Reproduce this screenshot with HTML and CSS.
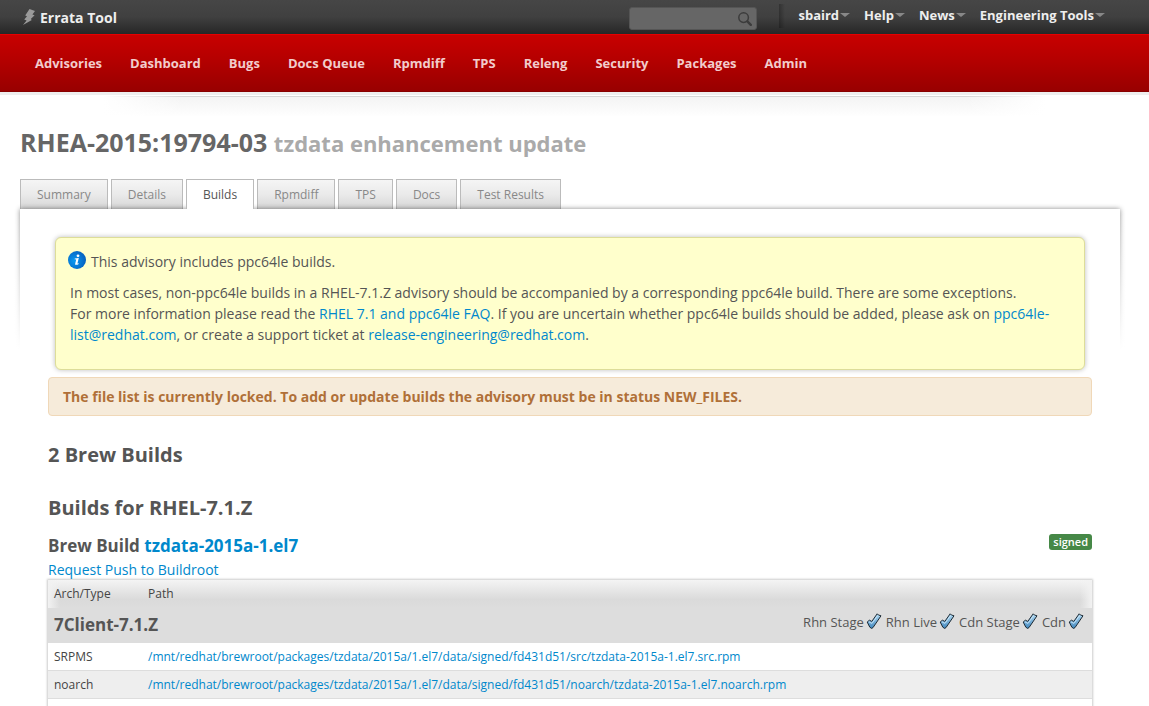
FILE: index.html
```html
<!DOCTYPE html>
<html lang="en">
<head>
<meta charset="utf-8">
<meta name="viewport" content="width=device-width, initial-scale=1">
<title>RHEA-2015:19794-03 - Errata Tool</title>
<link rel="stylesheet" href="styles.css">
</head>
<body>
<svg class="defs" aria-hidden="true">
  <defs>
    <linearGradient id="tick-fill" x1="0" y1="0" x2="0" y2="1"><stop offset="0" stop-color="#b4dcf5"/><stop offset="1" stop-color="#3f86bd"/></linearGradient>
    <radialGradient id="info-fill" cx=".35" cy=".55" r=".75"><stop offset="0" stop-color="#0a9af0"/><stop offset="1" stop-color="#0457b8"/></radialGradient>
    <symbol id="tick" viewBox="0 0 16 16"><path d="M1.2 9 3.4 7.2 5.8 8.4 11.2 .8 12.4 2 15 2.8 7 14.6 5.6 15.4 3.8 14.2Z" fill="url(#tick-fill)" stroke="#1c2a34" stroke-width="1" stroke-linejoin="round"/><path d="M2.8 8.8 6 10.4 11.6 2.6" fill="none" stroke="#d6eefb" stroke-width=".8"/></symbol>
  </defs>
</svg>
<header>
  <div class="topbar">
    <a class="brand" href="#">
      <svg class="bolt" viewBox="0 0 12 16" aria-hidden="true"><path d="M6.5 0 12 2 9.4 5.4 11.6 6.2 7.8 10 8.8 11 0 16 3.6 11.4 1.2 10.4 4 7.2 2.2 6.4Z" fill="#9a9a9a"/></svg>
      Errata Tool
    </a>
    <form class="search" role="search">
      <input type="search" aria-label="Search">
      <button type="button" aria-label="Search">
        <svg viewBox="0 0 14 14" aria-hidden="true"><circle cx="5.6" cy="5.6" r="4.8" fill="none" stroke="#3c3c3c" stroke-width="1.5"/><path d="M9.4 9.4 12.8 12.8" stroke="#3c3c3c" stroke-width="2.4" stroke-linecap="round"/></svg>
      </button>
    </form>
    <div class="menus">
      <button type="button">sbaird</button>
      <button type="button">Help</button>
      <button type="button">News</button>
      <button type="button">Engineering Tools</button>
    </div>
  </div>
  <nav class="mainnav" aria-label="Main">
    <a href="#">Advisories</a>
    <a href="#">Dashboard</a>
    <a href="#">Bugs</a>
    <a href="#">Docs Queue</a>
    <a href="#">Rpmdiff</a>
    <a href="#">TPS</a>
    <a href="#">Releng</a>
    <a href="#">Security</a>
    <a href="#">Packages</a>
    <a href="#">Admin</a>
  </nav>
  <div class="underline"></div>
</header>
<main>
  <h1>RHEA-2015:19794-03 <small>tzdata enhancement update</small></h1>
  <nav class="tabs" aria-label="Advisory">
    <a href="#">Summary</a>
    <a href="#">Details</a>
    <a href="#" class="active" aria-current="page">Builds</a>
    <a href="#">Rpmdiff</a>
    <a href="#">TPS</a>
    <a href="#">Docs</a>
    <a href="#">Test Results</a>
  </nav>
  <section class="panel">
    <div class="content">
      <div class="note">
        <p class="note-title">
          <svg viewBox="0 0 18 18" aria-hidden="true"><circle cx="9" cy="9" r="9" fill="url(#info-fill)"/><circle cx="10" cy="4.8" r="1.4" fill="#fff"/><path d="M6.8 7.4 10.8 7 9.4 12.4 10.8 12.2 10.4 13.2Q8.6 14.2 7 13.4L8.2 8.4 6.6 8.2Z" fill="#fff"/></svg>
          This advisory includes ppc64le builds.
        </p>
        <p>In most cases, non-ppc64le builds in a RHEL-7.1.Z advisory should be accompanied by a corresponding ppc64le build. There are some exceptions.<br>
        For more information please read the <a href="#">RHEL 7.1 and ppc64le FAQ</a>. If you are uncertain whether ppc64le builds should be added, please ask on <a href="#">ppc64le-list@redhat.com</a>, or create a support ticket at <a href="#">release-engineering@redhat.com</a>.</p>
      </div>
      <div class="locked">The file list is currently locked. To add or update builds the advisory must be in status NEW_FILES.</div>
      <h2>2 Brew Builds</h2>
      <h2>Builds for RHEL-7.1.Z</h2>
      <div class="build-head">
        <h3>Brew Build <a href="#">tzdata-2015a-1.el7</a></h3>
        <span class="badge">signed</span>
      </div>
      <a href="#">Request Push to Buildroot</a>
      <table>
        <thead>
          <tr><th class="arch">Arch/Type</th><th>Path</th></tr>
        </thead>
        <tbody>
          <tr class="variant">
            <td colspan="2">
              <div class="variant-row">
                <h3>7Client-7.1.Z</h3>
                <div class="flags">
                  <span>Rhn Stage <svg role="img" aria-label="enabled"><use href="#tick"/></svg></span>
                  <span>Rhn Live <svg role="img" aria-label="enabled"><use href="#tick"/></svg></span>
                  <span>Cdn Stage <svg role="img" aria-label="enabled"><use href="#tick"/></svg></span>
                  <span>Cdn <svg role="img" aria-label="enabled"><use href="#tick"/></svg></span>
                </div>
              </div>
            </td>
          </tr>
          <tr><td>SRPMS</td><td><a href="#">/mnt/redhat/brewroot/packages/tzdata/2015a/1.el7/data/signed/fd431d51/src/tzdata-2015a-1.el7.src.rpm</a></td></tr>
          <tr class="odd"><td>noarch</td><td><a href="#">/mnt/redhat/brewroot/packages/tzdata/2015a/1.el7/data/signed/fd431d51/noarch/tzdata-2015a-1.el7.noarch.rpm</a></td></tr>
          <tr><td></td><td></td></tr>
        </tbody>
      </table>
    </div>
  </section>
</main>
</body>
</html>
```
FILE: styles.css
```css
* { box-sizing: border-box; }
html { overflow: hidden; }
body {
  margin: 0;
  background: #fff;
  color: #555;
  font: 14px/21px "Droid Sans", "Open Sans", "Noto Sans", sans-serif;
}
a { color: #08c; text-decoration: none; }
h1, h2, h3, p { margin: 0; }
.defs { position: absolute; width: 0; height: 0; }

.topbar {
  display: flex;
  align-items: flex-start;
  height: 34px;
  padding: 0 44px 0 23px;
  background: linear-gradient(#464646, #404040 50%, #262626);
}
.brand {
  display: flex;
  gap: 5px;
  align-items: center;
  height: 34px;
  margin-right: auto;
  color: #eee;
  font-weight: bold;
}
.bolt { width: 12px; height: 16px; }
.search {
  display: flex;
  width: 128px;
  height: 23px;
  margin: 7px 22px 0 0;
  border: 1px solid #555;
  border-radius: 3px;
  background: #666;
}
.search input { flex: 1; min-width: 0; border: 0; background: none; color: #eee; outline: 0; }
.search button { display: flex; align-items: center; width: 18px; padding: 0; border: 0; background: none; }
.search svg { width: 14px; height: 14px; }
.menus {
  display: flex;
  gap: 14px;
  height: 24px;
  margin-top: 4px;
  padding-left: 19px;
  background: linear-gradient(90deg, #0004, #0000) no-repeat 0 0 / 6px 100%;
}
.menus button {
  display: flex;
  align-items: center;
  gap: 1px;
  height: 21px;
  padding: 0;
  border: 0;
  background: none;
  color: #eee;
  font: bold 13px/20px "Droid Sans", "Open Sans", "Noto Sans", sans-serif;
}
.menus button::after {
  content: "";
  border: 5px solid transparent;
  border-top: 4px solid #888;
  border-bottom: 0;
}
.mainnav {
  display: flex;
  gap: 28px;
  height: 58px;
  padding: 0 35px;
  border-top: 1px solid #e60000;
  border-bottom: 1px solid #800;
  background: linear-gradient(#c80000, #b40000 45%, #980000);
}
.mainnav a { color: #f2cccc; font-size: 13px; font-weight: bold; line-height: 57px; }
.underline {
  height: 24px;
  border-top: 3px solid #eee;
  background:
    linear-gradient(90deg, #fff 9%, #fff0 16%, #fff0 84%, #fff 91%) 0 1px no-repeat,
    linear-gradient(#d8d8d8, #d8d8d8) 0 1px / 100% 1px no-repeat,
    linear-gradient(#f4f4f4, #fff) 0 2px no-repeat;
}

main { padding: 8px 29px 0 20px; }
h1 { color: #666; font-size: 25px; line-height: 36px; }
h1 small { color: #aaa; font-size: 22px; }
.tabs { display: flex; gap: 3px; margin-top: 18px; }
.tabs a {
  height: 30px;
  padding: 0 16px;
  border: 1px solid #bbb;
  border-bottom: 0;
  background: linear-gradient(#f5f5f5, #eaeaea 50%, #d6d6d6);
  color: #888;
  font-size: 12px;
  line-height: 29px;
}
.tabs .active { position: relative; z-index: 2; background: #fff; color: #555; }

.panel { position: relative; background: #fff; box-shadow: 0 0 5px #0007; }
.panel::before {
  content: "";
  position: absolute;
  inset: 0 -8px -8px;
  background: linear-gradient(#fff0, #fff 140px);
}
.content { position: relative; padding: 28px 28px 0; }
.note {
  margin: 0 7px 7px;
  padding: 13px 28px 24px 14px;
  border: 1px solid #dd9;
  border-radius: 6px;
  background: #ffc;
  box-shadow: 0 0 5px #0004;
}
.note-title { display: flex; align-items: center; gap: 5px; margin: 0 0 10px -2px; }
.note-title svg { width: 18px; height: 18px; margin-bottom: 3px; }
.locked {
  padding: 8px 14px;
  border: 1px solid #f0d8b8;
  border-radius: 4px;
  background: #f6ebda;
  color: #b07038;
  font-weight: bold;
}
h2 { margin-top: 24px; font-size: 20px; line-height: 29px; }
.build-head {
  display: flex;
  align-items: flex-start;
  justify-content: space-between;
  margin-top: 12px;
  padding-bottom: 1px;
}
h3 { font-size: 17px; line-height: 24px; }
.badge {
  padding: 0 4px;
  border-radius: 3px;
  background: #468847;
  color: #fff;
  font-size: 11px;
  font-weight: 600;
  line-height: 16px;
}
table {
  width: 100%;
  border-collapse: collapse;
  box-shadow: 0 0 2px 1px #ccc;
  color: #444;
  font-size: 12px;
  line-height: 18px;
}
thead {
  background:
    linear-gradient(90deg, #f2f2f2, #f2f2f200 12px calc(100% - 12px), #f2f2f2),
    linear-gradient(#f4f4f4, #dadada 70%, #ddd);
}
th, td { padding: 5px 6px 4px; text-align: left; font-weight: normal; }
th { padding-bottom: 5px; }
td { height: 28px; border-bottom: 1px solid #ddd; }
.arch { width: 94px; }
.variant td { padding: 5px 8px 5px 6px; background: #ddd; }
.variant-row { display: flex; justify-content: space-between; color: #555; }
.flags { display: flex; gap: 4px; font-size: 13px; }
.flags span { display: flex; gap: 2px; height: 18px; }
.flags svg { width: 16px; height: 16px; }
.odd { background: #eee; }
```
